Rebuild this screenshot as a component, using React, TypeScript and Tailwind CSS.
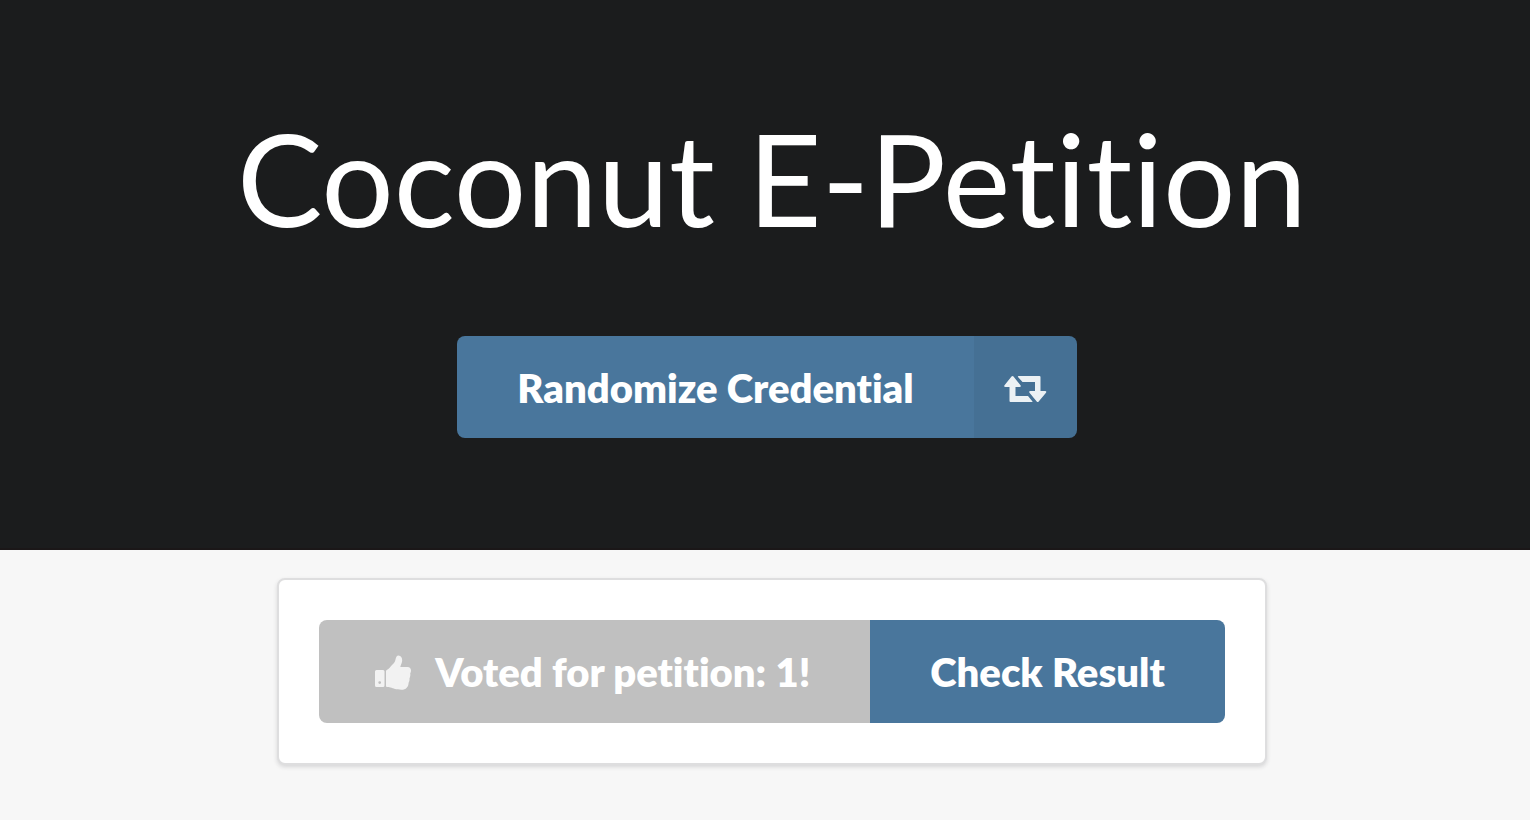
import { useState } from "react";

function ThumbsUp() {
    return (
        <svg viewBox="0 0 36 36" className="size-9 fill-current opacity-80" aria-hidden="true">
            <path fillRule="evenodd" d="M1.500 16H8Q9.500 16 9.500 17.500V31.500Q9.500 33 8 33H1.500Q0 33 0 31.500V17.500Q0 16 1.500 16ZM4.700 27.200A1.400 1.400 0 1 0 4.700 30A1.400 1.400 0 1 0 4.700 27.200Z" />
            <path d="M11 17.200Q11 16.300 11.800 16C14 15 15.500 12.500 17 11C19 9.300 20 8 20.500 5.500C21 3.500 21.500 1.500 23.500 1.500C26 1.500 27.200 3.700 27.200 6.200C27.200 8.700 25.800 10.700 25.300 13H32.500C34.800 13 36 14.600 36 16.500C36 17.800 35.500 18.700 35.200 19.500C35.600 21.300 35.200 23 34.500 24.300C34.700 26 34.300 27.500 33.600 28.700C33.500 33 31 35.700 26.500 35.700C21 35.700 18.500 34.500 15.500 33.600C14 33.100 13 33 12 33Q11 33 11 32Z" />
        </svg>
    );
}

function Retweet() {
    return (
        <svg viewBox="0 0 44 28" className="h-7 w-11 fill-current opacity-90" aria-hidden="true">
            <path d="M9.500 1Q10 1 10.500 1.600L17.500 10.200Q18.500 12 16.500 12H12.500V21H25L29.500 26.500Q29.500 27 29 27H7.500Q6.500 27 6.500 26V12H2.500Q.500 12 1.500 10.200L8.500 1.600Q9 1 9.500 1Z" />
            <path d="M15.500 1H36.500Q37.500 1 37.500 2V16H42Q44 16 43 17.800L35.700 26.400Q34.700 27.600 33.700 26.400L26.500 17.800Q25.500 16 27.500 16H32V7H19.500L15 2Q14.500 1 15.500 1Z" />
        </svg>
    );
}

export default function App() {
    const [voted] = useState(true);
    return (
        <div className="min-h-screen bg-[#f7f7f7] font-['Lato',sans-serif] text-white [font-variant-ligatures:none]">
            <header className="flex flex-col items-center gap-21 border-b-2 border-[#1b1718] bg-[#1b1c1d] pt-26 pb-[110px] pl-3.5">
                <h1 className="text-[128px] leading-[148px]">Coconut E-Petition</h1>
                <button type="button" className="mr-2.5 flex h-[102px] overflow-hidden rounded-lg bg-[#49769c] text-[40px] leading-10 font-extrabold hover:bg-[#3e6b91]">
                    <span className="self-center px-15 pt-0.5">Randomize Credential</span>
                    <span className="flex w-[103px] items-center justify-center self-stretch bg-black/5 pt-1">
                        <Retweet />
                    </span>
                </button>
            </header>

            <main className="flex justify-center py-7 pl-3.5">
                <div className="rounded-lg border-2 border-[#dededf] bg-white p-10 shadow-[0_2px_4px_rgba(34,36,38,0.15)]">
                    <div className="flex h-[103px] overflow-hidden rounded-lg text-[40px] leading-10 font-extrabold">
                        <button type="button" disabled={voted} className="flex items-center gap-6 bg-[#c0c0c0] pr-15 pl-14">
                            <ThumbsUp />
                            <span>Voted for petition: 1!</span>
                        </button>
                        <button type="button" className="bg-[#49769c] px-15 hover:bg-[#3e6b91]">Check Result</button>
                    </div>
                </div>
            </main>
        </div>
    );
}
